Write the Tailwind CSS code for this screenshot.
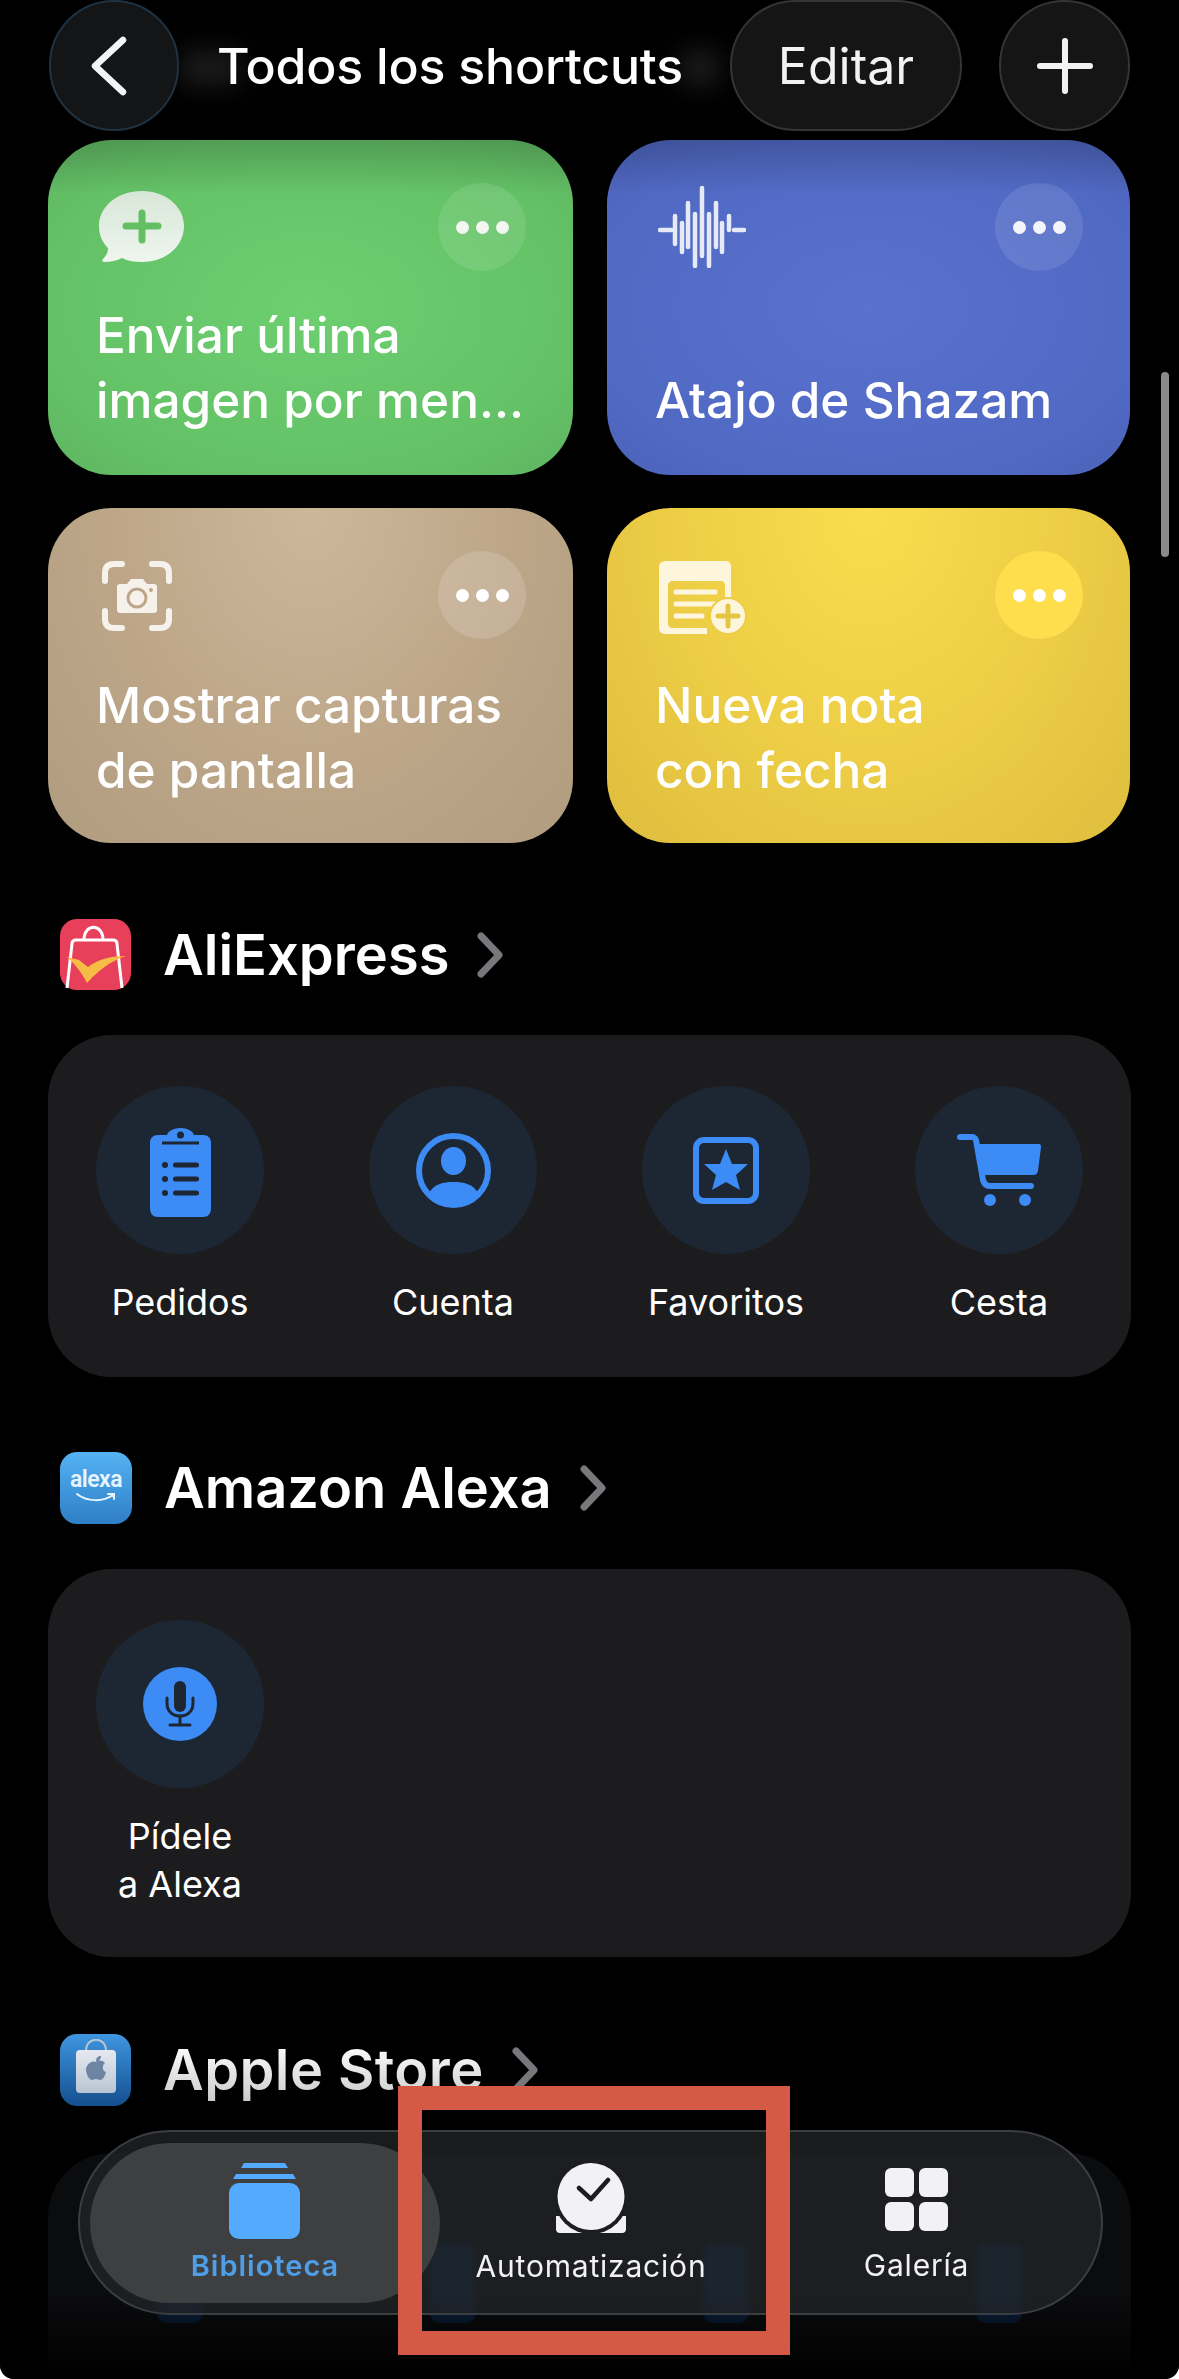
<!DOCTYPE html>
<html lang="es">
<head>
    <meta charset="UTF-8">
    <title>Todos los shortcuts</title>
    <script src="https://cdn.jsdelivr.net/npm/@tailwindcss/browser@4"></script>
</head>
<body class="bg-white">
<div class="relative w-[1179px] h-[2379px] overflow-hidden bg-black rounded-b-[14px] font-['Inter',sans-serif] text-white">

    <!-- top bar -->
    <div class="relative flex items-center h-[131px] pl-[49px] pr-[49px]">
        <div class="absolute left-[180px] top-[50px] w-[60px] h-[36px] bg-white/10 blur-md"></div>
        <div class="absolute left-[680px] top-[50px] w-[40px] h-[36px] bg-white/10 blur-md"></div>
        <div class="relative w-[130px] h-[131px] rounded-full bg-[#131517] border-2 border-[#1f3242] flex items-center justify-center">
            <svg class="mr-[10px]" width="40" height="60" viewBox="0 0 40 60" fill="none" stroke="#f2f5f8" stroke-width="6.500" stroke-linecap="round" stroke-linejoin="round"><path d="M34 4 L6 30 L34 56"/></svg>
        </div>
        <div class="relative ml-[38px] w-[513px] text-[50px] font-medium leading-none tracking-[-0.2px] whitespace-nowrap">Todos los shortcuts</div>
        <div class="relative w-[232px] h-[131px] rounded-full bg-[#151515] border-2 border-[#333436] flex items-center justify-center text-[50px] leading-none text-[#f2f2f2] shrink-0">Editar</div>
        <div class="relative ml-[37px] w-[131px] h-[131px] rounded-full bg-[#151515] border-2 border-[#333436] flex items-center justify-center shrink-0">
            <svg width="56" height="56" viewBox="0 0 56 56" fill="none" stroke="#f2f2f2" stroke-width="6" stroke-linecap="round"><path d="M28 3V53M3 28H53"/></svg>
        </div>
    </div>

    <!-- shortcut cards -->
    <div class="mt-[9px] ml-[48px] grid grid-cols-[525px_523px] grid-rows-[335px_335px] gap-x-[34px] gap-y-[33px]">

        <div class="relative rounded-[64px] px-[48px] bg-[linear-gradient(to_bottom,#0000002e_0%,#00000000_16%),radial-gradient(ellipse_at_50%_50%,#6dcf70_0%,#63c066_75%,#5fb561_100%)]">
            <div class="flex justify-between pt-[43px] h-[163px]">
                <svg class="mt-[8px] ml-[3px]" width="85" height="71" viewBox="0 0 85 71">
                    <defs><linearGradient id="chat" x1="0" y1="0" x2="0" y2="1"><stop offset="0" stop-color="#d8e6d8"/><stop offset="1" stop-color="#eef6ee"/></linearGradient></defs>
                    <path d="M43 0C66 0 85 15 85 35C85 56 66 71 43 71C36 71 29 70 23 67C17 70 10 71 5 71C3 71 3 69 4 68C7 65 9 62 9 57C3 51 0 44 0 35C0 15 19 0 43 0Z" fill="url(#chat)"/>
                    <path d="M43 22V49M27 35H59" stroke="#62bf64" stroke-width="7" stroke-linecap="round"/>
                </svg>
                <div class="w-[88px] h-[88px] -mr-[1px] rounded-full bg-white/10 flex items-center justify-center gap-[7px]">
                    <span class="w-[13px] h-[13px] rounded-full bg-[#f4f6f4]"></span><span class="w-[13px] h-[13px] rounded-full bg-[#f4f6f4]"></span><span class="w-[13px] h-[13px] rounded-full bg-[#f4f6f4]"></span>
                </div>
            </div>
            <div class="text-[49.500px] leading-[65px] font-medium whitespace-nowrap">Enviar última<br>imagen por men...</div>
        </div>

        <div class="relative rounded-[64px] px-[48px] bg-[linear-gradient(to_bottom,#0000002e_0%,#00000000_16%),radial-gradient(ellipse_at_50%_50%,#5a72cf_0%,#5069c3_75%,#4b62b8_100%)]">
            <div class="flex justify-between pt-[43px] h-[228px]">
                <svg width="88" height="83" viewBox="0 0 88 83" fill="none" stroke="#e6e9f6" stroke-width="4.500" stroke-linecap="round" class="mt-[2px] ml-[3px]">
                    <path d="M2 45H14M76 45H86"/>
                    <path d="M17 31V59M24 38V67M30 18V62M37 29V81M44 3V71M51 29V81M58 18V62M64 38V67M71 31V45"/>
                </svg>
                <div class="w-[88px] h-[88px] -mr-[1px] rounded-full bg-white/10 flex items-center justify-center gap-[7px]">
                    <span class="w-[13px] h-[13px] rounded-full bg-[#f4f5fb]"></span><span class="w-[13px] h-[13px] rounded-full bg-[#f4f5fb]"></span><span class="w-[13px] h-[13px] rounded-full bg-[#f4f5fb]"></span>
                </div>
            </div>
            <div class="text-[49.500px] leading-[65px] font-medium whitespace-nowrap">Atajo de Shazam</div>
        </div>

        <div class="relative rounded-[64px] px-[48px] bg-[radial-gradient(ellipse_at_50%_0%,#cdb79a_0%,#bda688_55%,#b09c80_100%)]">
            <div class="flex justify-between pt-[43px] h-[165px]">
                <svg class="mt-[10px] ml-[6px]" width="70" height="70" viewBox="0 0 70 70" fill="none">
                    <path d="M20 3H12C6 3 3 6 3 12V20M50 3H58C64 3 67 6 67 12V20M20 67H12C6 67 3 64 3 58V50M50 67H58C64 67 67 64 67 58V50" stroke="#f6f1ea" stroke-width="6" stroke-linecap="round"/>
                    <path d="M18 23H25L29 18H41L45 23H52C54 23 55 24 55 26V49C55 51 54 52 52 52H18C16 52 15 51 15 49V26C15 24 16 23 18 23Z" fill="#f6f1ea"/>
                    <circle cx="35" cy="37" r="9" fill="#f6f1ea" stroke="#bda688" stroke-width="3"/>
                    <circle cx="49" cy="29" r="2" fill="#bda688"/>
                </svg>
                <div class="w-[88px] h-[88px] -mr-[1px] rounded-full bg-white/15 flex items-center justify-center gap-[7px]">
                    <span class="w-[13px] h-[13px] rounded-full bg-white"></span><span class="w-[13px] h-[13px] rounded-full bg-white"></span><span class="w-[13px] h-[13px] rounded-full bg-white"></span>
                </div>
            </div>
            <div class="text-[49.500px] leading-[65px] font-medium whitespace-nowrap">Mostrar capturas<br>de pantalla</div>
        </div>

        <div class="relative rounded-[64px] px-[48px] bg-[radial-gradient(ellipse_at_50%_0%,#fadd4e_0%,#eccd45_55%,#dfbd3e_100%)]">
            <div class="flex justify-between pt-[43px] h-[165px]">
                <svg class="mt-[10px] ml-[4px]" width="88" height="74" viewBox="0 0 88 74" fill="none">
                    <path d="M7 0H66C70 0 72 2 72 6V38H66V24C66 22 65 20 62 20H14C11 20 9 22 9 25V62C9 65 11 67 14 67H48V73H7C3 73 0 71 0 67V6C0 2 3 0 7 0Z" fill="#fdf6dd"/>
                    <path d="M17 31H56M17 43H56M17 55H43" stroke="#fdf6dd" stroke-width="5" stroke-linecap="round"/>
                    <circle cx="69" cy="55" r="18" fill="#fdf6dd" stroke="#eccd45" stroke-width="2"/>
                    <path d="M69 45V65M59 55H79" stroke="#e6c641" stroke-width="5" stroke-linecap="round"/>
                </svg>
                <div class="w-[88px] h-[88px] -mr-[1px] rounded-full bg-[#fede4c] flex items-center justify-center gap-[7px]">
                    <span class="w-[13px] h-[13px] rounded-full bg-white"></span><span class="w-[13px] h-[13px] rounded-full bg-white"></span><span class="w-[13px] h-[13px] rounded-full bg-white"></span>
                </div>
            </div>
            <div class="text-[49.500px] leading-[65px] font-medium whitespace-nowrap">Nueva nota<br>con fecha</div>
        </div>
    </div>

    <!-- AliExpress -->
    <div class="mt-[76px] ml-[60px] flex items-center h-[71px]">
        <svg width="71" height="71" viewBox="0 0 71 71" fill="none">
            <rect width="71" height="71" rx="17" fill="#e8405a"/>
            <path d="M7 69L12 25C12 22 14 21 16 21H53C55 21 57 22 57 25L62 69" stroke="#fff" stroke-width="3"/>
            <path d="M24 21C24 4 43 4 43 21" stroke="#fff" stroke-width="3"/>
            <path d="M7 38L19 41L28 48C38 40 52 37 66 37C50 42 38 52 27 64C22 54 15 45 7 38Z" fill="#f7bc45"/>
        </svg>
        <div class="ml-[32px] text-[56px] font-semibold leading-none">AliExpress</div>
        <svg class="ml-[28px]" width="26" height="46" viewBox="0 0 26 46" fill="none" stroke="#77777c" stroke-width="7" stroke-linecap="round" stroke-linejoin="round"><path d="M4 4L22 23L4 42"/></svg>
    </div>

    <div class="mt-[45px] mx-[48px] h-[342px] rounded-[64px] bg-[#1c1c1e] pt-[51px] px-[48px] grid grid-cols-[168px_168px_168px_168px] gap-x-[105px]">
        <div class="flex flex-col items-center">
            <div class="w-[168px] h-[168px] rounded-full bg-[#1d2733] flex items-center justify-center">
                <svg class="mt-[4px]" width="61" height="89" viewBox="0 0 61 89">
                    <path d="M8 7H17C18 3 24 0 30.500 0C37 0 43 3 44 7H53C58 7 61 10 61 15V80C61 86 58 89 53 89H8C3 89 0 86 0 80V15C0 10 3 7 8 7Z" fill="#3d8bf5"/>
                    <path d="M12 15H49" stroke="#1d2733" stroke-width="3"/>
                    <circle cx="30.500" cy="7" r="3.500" fill="#1d2733"/>
                    <g fill="#1d2733"><circle cx="15" cy="37" r="3"/><circle cx="15" cy="51" r="3"/><circle cx="15" cy="65" r="3"/><rect x="23" y="34.500" width="26" height="5" rx="2.500"/><rect x="23" y="48.500" width="26" height="5" rx="2.500"/><rect x="23" y="62.500" width="26" height="5" rx="2.500"/></g>
                </svg>
            </div>
            <div class="mt-[24px] text-[36px] leading-[48px] whitespace-nowrap">Pedidos</div>
        </div>
        <div class="flex flex-col items-center">
            <div class="w-[168px] h-[168px] rounded-full bg-[#1d2733] flex items-center justify-center">
                <svg width="75" height="75" viewBox="0 0 75 75">
                    <circle cx="37.500" cy="37.500" r="34.500" fill="none" stroke="#3d8bf5" stroke-width="6"/>
                    <ellipse cx="37.500" cy="28" rx="12.500" ry="14" fill="#3d8bf5"/>
                    <path d="M13 60C18 51 27 49 37.500 49C48 49 57 51 62 60C56 68 47 72 37.500 72C28 72 19 68 13 60Z" fill="#3d8bf5"/>
                </svg>
            </div>
            <div class="mt-[24px] text-[36px] leading-[48px] whitespace-nowrap">Cuenta</div>
        </div>
        <div class="flex flex-col items-center">
            <div class="w-[168px] h-[168px] rounded-full bg-[#1d2733] flex items-center justify-center">
                <svg width="66" height="67" viewBox="0 0 66 67">
                    <rect x="3" y="3" width="60" height="61" rx="8" fill="none" stroke="#3d8bf5" stroke-width="6"/>
                    <path d="M33 12L39 27L55 27L43 38L47 53L33 45L19 53L23 38L11 27L27 27Z" fill="#3d8bf5"/>
                </svg>
            </div>
            <div class="mt-[24px] text-[36px] leading-[48px] whitespace-nowrap">Favoritos</div>
        </div>
        <div class="flex flex-col items-center">
            <div class="w-[168px] h-[168px] rounded-full bg-[#1d2733] flex items-center justify-center">
                <svg width="84" height="72" viewBox="0 0 84 72" fill="none">
                    <path d="M3 3H15C17 3 18 4 19 6L26 46C27 50 29 52 33 52H74" stroke="#3d8bf5" stroke-width="6" stroke-linecap="round"/>
                    <path d="M19 10H82C84 10 84 12 84 13L81 37C80 40 79 41 76 41H25Z" fill="#3d8bf5"/>
                    <circle cx="33" cy="66" r="6" fill="#3d8bf5"/><circle cx="68" cy="66" r="6" fill="#3d8bf5"/>
                </svg>
            </div>
            <div class="mt-[24px] text-[36px] leading-[48px] whitespace-nowrap">Cesta</div>
        </div>
    </div>

    <!-- Amazon Alexa -->
    <div class="mt-[75px] ml-[60px] flex items-center h-[72px]">
        <div class="relative w-[72px] h-[72px] rounded-[17px] bg-linear-to-b from-[#54b2f2] to-[#2f7fc6] flex flex-col items-center pt-[16px]">
            <div class="text-[23px] leading-[24px] font-semibold text-[#e6f4ff] tracking-[-0.5px] font-['Roboto',sans-serif]">alexa</div>
            <svg width="42" height="12" viewBox="0 0 42 12" fill="none" stroke="#e6f4ff" stroke-width="2" stroke-linecap="round"><path d="M2 2C12 10 28 10 38 3M33 2H39V7"/></svg>
        </div>
        <div class="ml-[32px] text-[56px] font-semibold leading-none">Amazon Alexa</div>
        <svg class="ml-[28px]" width="26" height="46" viewBox="0 0 26 46" fill="none" stroke="#77777c" stroke-width="7" stroke-linecap="round" stroke-linejoin="round"><path d="M4 4L22 23L4 42"/></svg>
    </div>

    <div class="mt-[45px] mx-[48px] h-[388px] rounded-[64px] bg-[#1c1c1e] pt-[51px] px-[48px]">
        <div class="flex flex-col items-center w-[168px]">
            <div class="w-[168px] h-[168px] rounded-full bg-[#1d2733] flex items-center justify-center">
                <div class="w-[74px] h-[74px] rounded-full bg-[#3d8bf5] flex items-center justify-center">
                    <svg width="30" height="46" viewBox="0 0 30 46" fill="none" stroke="#1d2733" stroke-linecap="round">
                        <rect x="9" y="0" width="12" height="31" rx="6" fill="#1d2733" stroke="none"/>
                        <path d="M2 17V22C2 30 7 35 15 35C23 35 28 30 28 22V17" stroke-width="3"/>
                        <path d="M15 35V43M5 44H25" stroke-width="3"/>
                    </svg>
                </div>
            </div>
            <div class="mt-[24px] text-[36px] leading-[48px] text-center whitespace-nowrap">Pídele<br>a Alexa</div>
        </div>
    </div>

    <!-- Apple Store -->
    <div class="mt-[77px] ml-[60px] flex items-center h-[72px]">
        <div class="w-[71px] h-[72px] rounded-[17px] bg-linear-to-b from-[#3f96e0] to-[#14508f] flex justify-center pt-[5px]">
            <svg width="40" height="54" viewBox="0 0 40 54" fill="none">
                <defs><linearGradient id="bag" x1="0" y1="0" x2="0" y2="1"><stop offset="0" stop-color="#e6e9ee"/><stop offset="1" stop-color="#b9c5d2"/></linearGradient></defs>
                <path d="M10 12C10 -3 30 -3 30 12" stroke="#b8c6d4" stroke-width="2"/>
                <rect x="0" y="11" width="40" height="43" rx="4" fill="url(#bag)"/>
                <path d="M20 23C22 21 26 21 29 24C26 26 26 32 30 33C29 37 27 41 24 41C22 41 22 40 20 40C18 40 18 41 16 41C13 41 10 35 10 30C11 24 17 21 20 23ZM20 22C20 19 22 17 25 17C25 20 23 22 20 22Z" fill="#6d85a3"/>
            </svg>
        </div>
        <div class="ml-[32px] text-[56px] font-semibold leading-none tracking-[0.4px] bg-linear-to-b from-white to-[#c4c4c4] bg-clip-text text-transparent pb-[12px] -mb-[12px]">Apple Store</div>
        <svg class="ml-[28px]" width="26" height="46" viewBox="0 0 26 46" fill="none" stroke="#77777c" stroke-width="7" stroke-linecap="round" stroke-linejoin="round"><path d="M4 4L22 23L4 42"/></svg>
    </div>

    <!-- next card, mostly hidden under the tab bar -->
    <div class="mt-[47px] mx-[48px] h-[342px] rounded-[64px] bg-[#0b0c0e] pt-[90px] px-[109px] flex gap-x-[227px]">
        <div class="w-[46px] h-[80px] rounded-[10px] bg-[#0a1f3a] shrink-0"></div>
        <div class="w-[46px] h-[80px] rounded-[10px] bg-[#0a1f3a] shrink-0"></div>
        <div class="w-[46px] h-[80px] rounded-[10px] bg-[#0a1f3a] shrink-0"></div>
        <div class="w-[46px] h-[80px] rounded-[10px] bg-[#0a1f3a] shrink-0"></div>
    </div>
    <div class="absolute left-0 right-0 bottom-0 h-[90px] bg-linear-to-b from-transparent to-black"></div>

    <!-- scrollbar -->
    <div class="absolute left-[1161px] top-[372px] w-[8px] h-[185px] rounded-full bg-[#8a8a8a]"></div>

    <!-- tab bar -->
    <div class="absolute left-[78px] top-[2130px] w-[1025px] h-[185px] rounded-full bg-[#24262a]/70 backdrop-blur-[3px] border-2 border-[#3a3d42] flex items-center">
        <div class="absolute left-[10px] top-[11px] w-[350px] h-[160px] rounded-full bg-[#454547]/85"></div>
        <div class="relative w-[370px] flex flex-col items-center pt-[2px]">
            <svg class="-ml-[2px]" width="71" height="76" viewBox="0 0 71 76" fill="#54aaff">
                <path d="M15 0H56L59 5H12Z"/><path d="M7 11H64L67 16H4Z"/>
                <rect x="0" y="20" width="71" height="56" rx="10"/>
            </svg>
            <div class="mt-[9px] text-[29px] leading-[36px] font-semibold tracking-[1px] text-[#4f9fe8]">Biblioteca</div>
        </div>
        <div class="relative w-[282px] flex flex-col items-center pt-[2px]">
            <svg width="70" height="70" viewBox="0 0 70 70" class="mb-[6px]">
                <path d="M0 53V66C0 68 1 70 4 70H66C69 70 70 68 70 66V53Z" fill="#f2f2f4"/>
                <circle cx="35" cy="34" r="37" fill="#1c1d20"/>
                <circle cx="35" cy="33.500" r="33.500" fill="#f2f2f4"/>
                <path d="M23 25L35 36L52 17" fill="none" stroke="#1c1d20" stroke-width="4.500" stroke-linecap="round" stroke-linejoin="round"/>
            </svg>
            <div class="mt-[9px] text-[30px] leading-[36px] tracking-[0.8px] text-[#f2f2f2] whitespace-nowrap">Automatización</div>
        </div>
        <div class="relative w-[369px] flex flex-col items-center pt-[2px]">
            <div class="grid grid-cols-[29px_29px] grid-rows-[29px_29px] gap-x-[5px] gap-y-[5px] mt-[4px] mb-[7px]">
                <span class="rounded-[6px] bg-[#f2f2f4]"></span><span class="rounded-[6px] bg-[#f2f2f4]"></span><span class="rounded-[6px] bg-[#f2f2f4]"></span><span class="rounded-[6px] bg-[#f2f2f4]"></span>
            </div>
            <div class="mt-[9px] text-[30px] leading-[36px] tracking-[0.8px] text-[#f2f2f2]">Galería</div>
        </div>
    </div>

    <!-- annotation box -->
    <div class="absolute left-[398px] top-[2086px] w-[392px] h-[269px] border-[24px] border-[#d55a46]"></div>
</div>
</body>
</html>
